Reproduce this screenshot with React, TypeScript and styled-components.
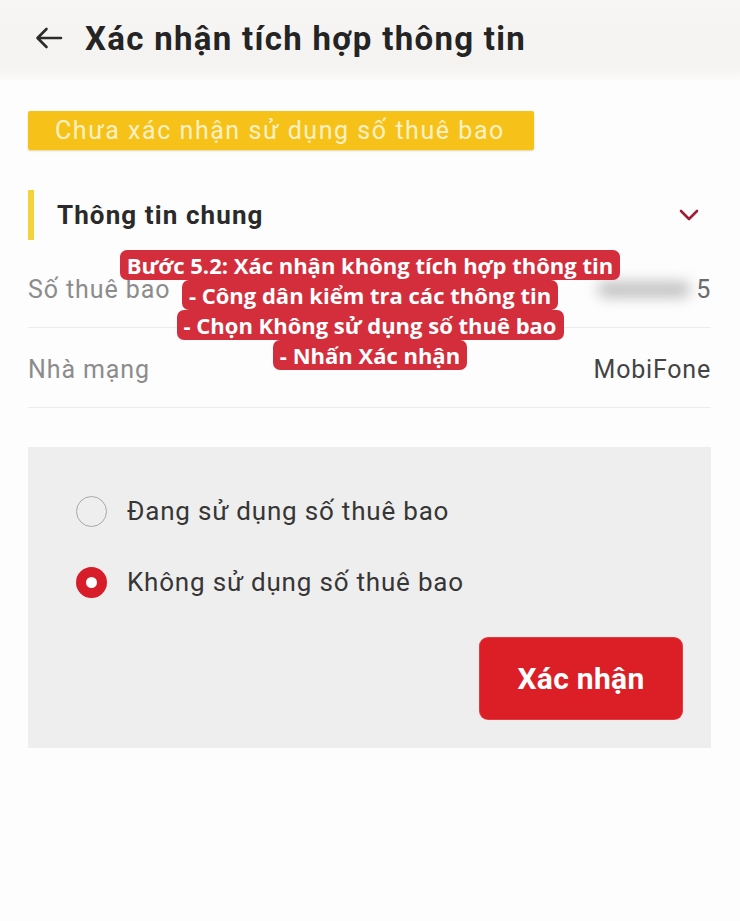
import React from 'react';
import styled, { createGlobalStyle } from 'styled-components';

type Row = {
  label: string;
  value: string;
  hidden?: boolean;
};

const rows: Row[] = [
  { label: 'Số thuê bao', value: '5', hidden: true },
  { label: 'Nhà mạng', value: 'MobiFone' },
];

const options = [
  { label: 'Đang sử dụng số thuê bao', checked: false },
  { label: 'Không sử dụng số thuê bao', checked: true },
];

const caption = [
  'Bước 5.2: Xác nhận không tích hợp thông tin',
  '- Công dân kiểm tra các thông tin',
  '- Chọn Không sử dụng số thuê bao',
  '- Nhấn Xác nhận',
];

const App = () => {
  return (
    <Page>
      <GlobalStyle />
      <Header>
        <BackIcon viewBox="0 0 28 22" fill="none">
          <path
            d="M26 11H3M11.5 2L2.5 11l9 9"
            stroke="#2b2b2b"
            strokeWidth="2.6"
            strokeLinecap="round"
            strokeLinejoin="round"
          />
        </BackIcon>
        <Title>Xác nhận tích hợp thông tin</Title>
      </Header>

      <Content>
        <Badge>Chưa xác nhận sử dụng số thuê bao</Badge>

        <SectionHead>
          <SectionTitle>Thông tin chung</SectionTitle>
          <Chevron viewBox="0 0 20 13" fill="none">
            <path
              d="M2 2l8 8 8-8"
              stroke="#9e1f35"
              strokeWidth="2.6"
              strokeLinecap="round"
              strokeLinejoin="round"
            />
          </Chevron>
        </SectionHead>

        {rows.map(row => (
          <InfoRow key={row.label}>
            <Label>{row.label}</Label>
            <Value faded={row.hidden}>
              {row.hidden && <Smudge />}
              {row.value}
            </Value>
          </InfoRow>
        ))}

        <Panel>
          <Options>
            {options.map(opt => (
              <Option key={opt.label}>
                <Radio checked={opt.checked} />
                <OptionText>{opt.label}</OptionText>
              </Option>
            ))}
          </Options>
          <Actions>
            <ConfirmButton>Xác nhận</ConfirmButton>
          </Actions>
        </Panel>
      </Content>

      <Caption>
        {caption.map(line => (
          <CaptionLine key={line}>{line}</CaptionLine>
        ))}
      </Caption>
    </Page>
  );
};

export default App;

const GlobalStyle = createGlobalStyle`
  html, body {
    margin: 0;
    padding: 0;
    background: #fdfdfd;
  }
  * {
    box-sizing: border-box;
  }
`;

const Page = styled.div`
  position: relative;
  width: 740px;
  height: 921px;
  overflow: hidden;
  background: #fdfdfd;
  font-family: Roboto, 'Noto Sans', sans-serif;
`;

const Header = styled.div`
  height: 80px;
  display: flex;
  align-items: center;
  padding: 0 0 4px 35px;
  background: linear-gradient(#f8f6f4 0%, #f5f3f1 80%, #fbfaf9 100%);
`;

const BackIcon = styled.svg`
  width: 28px;
  height: 22px;
  margin-right: 22px;
`;

const Title = styled.h1`
  margin: 0;
  font-size: 33px;
  font-weight: 700;
  color: #242424;
  letter-spacing: 1.3px;
`;

const Content = styled.div`
  padding: 31px 29px 0 28px;
`;

const Badge = styled.div`
  width: 506px;
  height: 39px;
  display: flex;
  align-items: center;
  padding-left: 27px;
  background: #f6c21a;
  border-radius: 2px;
  box-shadow: 0 1px 2px rgba(180, 140, 0, 0.35);
  color: #fdf1c4;
  font-size: 25px;
  letter-spacing: 1.55px;
`;

const SectionHead = styled.div`
  margin-top: 40px;
  height: 58px;
  display: flex;
  align-items: flex-start;
  justify-content: space-between;
`;

const SectionTitle = styled.div`
  height: 50px;
  display: flex;
  align-items: center;
  padding-left: 23px;
  border-left: 6px solid #f3d23b;
  font-size: 26px;
  font-weight: 700;
  color: #2a2a2a;
  letter-spacing: 1.1px;
`;

const Chevron = styled.svg`
  width: 20px;
  height: 13px;
  margin: 19px 12px 0 0;
`;

const InfoRow = styled.div`
  height: 80px;
  display: flex;
  align-items: center;
  justify-content: space-between;
  padding-top: 4px;
  border-bottom: 1.5px solid #ececec;
`;

const Label = styled.span`
  font-size: 25px;
  color: #8c8c8c;
  letter-spacing: 0.9px;
`;

const Value = styled.span<{ faded?: boolean }>`
  display: flex;
  align-items: center;
  font-size: 25px;
  color: ${props => (props.faded ? '#6a6a6a' : '#444')};
  letter-spacing: 0.8px;
`;

const Smudge = styled.span`
  width: 92px;
  height: 15px;
  margin-right: 6px;
  border-radius: 7px;
  background: #bdbdbd;
  filter: blur(7px);
`;

const Panel = styled.div`
  margin-top: 39px;
  height: 301px;
  background: #efeeee;
  padding: 49px 29px 29px 48px;
  display: flex;
  flex-direction: column;
`;

const Options = styled.div`
  display: flex;
  flex-direction: column;
  gap: 41px;
`;

const Option = styled.div`
  display: flex;
  align-items: center;
  gap: 20px;
  height: 30px;
`;

const Radio = styled.span<{ checked: boolean }>`
  width: 31px;
  height: 31px;
  border-radius: 50%;
  flex-shrink: 0;
  background: ${props => (props.checked ? '#fff' : 'transparent')};
  border: ${props =>
    props.checked ? '10px solid #d71d2a' : '1.5px solid #a8a8a8'};
`;

const OptionText = styled.span`
  font-size: 26px;
  color: #363636;
  letter-spacing: 0.8px;
`;

const Actions = styled.div`
  margin-top: auto;
  display: flex;
  justify-content: flex-end;
`;

const ConfirmButton = styled.button`
  width: 202px;
  height: 81px;
  border: none;
  border-radius: 8px;
  background: #dc1f27;
  box-shadow: 0 0 0 1px #e23a3f;
  color: #fff;
  font-family: Roboto, 'Noto Sans', sans-serif;
  font-size: 30px;
  font-weight: 700;
  letter-spacing: 0.3px;
`;

const Caption = styled.div`
  position: absolute;
  top: 250px;
  left: 0;
  right: 0;
  display: flex;
  flex-direction: column;
  align-items: center;
`;

const CaptionLine = styled.span`
  height: 30px;
  display: flex;
  align-items: center;
  padding: 0 7px;
  background: #d42e3c;
  border-radius: 7px;
  color: #fff;
  font-family: 'Open Sans', Roboto, sans-serif;
  font-size: 22px;
  font-weight: 700;
  letter-spacing: 0;
`;
